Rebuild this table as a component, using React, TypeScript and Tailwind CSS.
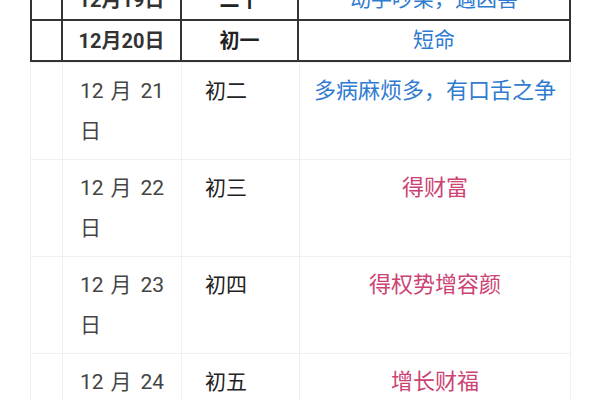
const topRows = [
  { date: '12月19日', lunar: '二十', note: '动手吵架，遇凶害' },
  { date: '12月20日', lunar: '初一', note: '短命' },
];

const rows = [
  { date: '12 月 21 日', lunar: '初二', note: '多病麻烦多，有口舌之争', color: 'text-[#2f7bd0]' },
  { date: '12 月 22 日', lunar: '初三', note: '得财富', color: 'text-[#cc4273]' },
  { date: '12 月 23 日', lunar: '初四', note: '得权势增容颜', color: 'text-[#cc4273]' },
  { date: '12 月 24 日', lunar: '初五', note: '增长财福', color: 'text-[#cc4273]' },
];

export default function App() {
  return (
    <div
      className="w-[600px] h-[400px] overflow-hidden bg-white pl-[30px]"
      style={{ fontFamily: 'Roboto, "Noto Sans CJK SC", sans-serif' }}
    >
      {/* Bordered section */}
      <table className="-mt-[22px] w-[541px] table-fixed border-collapse">
        <colgroup>
          <col className="w-[31px]" />
          <col className="w-[119px]" />
          <col className="w-[117px]" />
          <col />
        </colgroup>
        <tbody>
          {topRows.map((r) => (
            <tr key={r.date} className="h-[41px]">
              <td className="border-2 border-[#333]" />
              <td className="border-2 border-[#333] text-center text-[20px] font-bold text-[#333]">{r.date}</td>
              <td className="border-2 border-[#333] text-center text-[20px] font-bold text-[#222]">{r.lunar}</td>
              <td className="border-2 border-[#333] text-center text-[21px] text-[#2f7bd0]">{r.note}</td>
            </tr>
          ))}
        </tbody>
      </table>

      {/* Plain section */}
      <table className="w-[541px] table-fixed border-collapse">
        <colgroup>
          <col className="w-[32px]" />
          <col className="w-[119px]" />
          <col className="w-[118px]" />
          <col />
        </colgroup>
        <tbody>
          {rows.map((r) => (
            <tr key={r.date}>
              <td className="border border-[#efefef]" />
              <td className="border border-[#efefef] px-[17px] pt-[8px] pb-[8px] align-top text-justify text-[21px] leading-[40px] text-[#444]">
                {r.date}
              </td>
              <td className="border border-[#efefef] pl-[23px] pt-[8px] pb-[8px] align-top text-[21px] leading-[40px] text-[#222]">
                {r.lunar}
              </td>
              <td className={`border border-[#efefef] pt-[8px] pb-[8px] align-top text-center text-[22px] leading-[40px] ${r.color}`}>
                {r.note}
              </td>
            </tr>
          ))}
        </tbody>
      </table>
    </div>
  );
}
